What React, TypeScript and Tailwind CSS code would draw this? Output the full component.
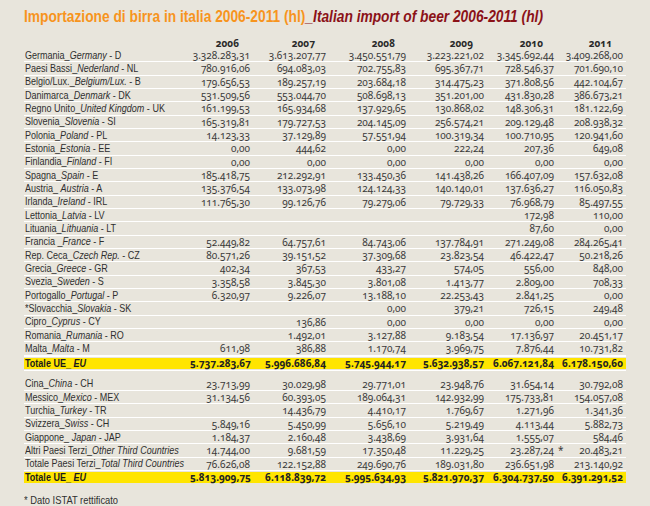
import React from 'react';

type Row = { it: string; en: string; code?: string; v: (string | null)[]; star?: boolean };

const eu: Row[] = [
  { it: 'Germania_', en: 'Germany', code: ' - D', v: ['3.328.283,31', '3.613.207,77', '3.450.551,79', '3.223.221,02', '3.345.692,44', '3.409.268,00'] },
  { it: 'Paesi Bassi_', en: 'Nederland', code: ' - NL', v: ['780.916,06', '694.083,03', '702.755,83', '695.367,71', '728.546,37', '701.690,10'] },
  { it: 'Belgio/Lux._', en: 'Belgium/Lux.', code: ' - B', v: ['179.656,53', '189.257,19', '203.684,18', '314.475,23', '371.808,56', '442.104,67'] },
  { it: 'Danimarca_', en: 'Denmark', code: ' - DK', v: ['531.509,56', '553.044,70', '508.698,13', '351.201,00', '431.830,28', '386.673,21'] },
  { it: 'Regno Unito_', en: 'United Kingdom', code: ' - UK', v: ['161.199,53', '165.934,68', '137.929,65', '130.868,02', '148.306,31', '181.122,69'] },
  { it: 'Slovenia_', en: 'Slovenia', code: ' - SI', v: ['165.319,81', '179.727,53', '204.145,09', '256.574,21', '209.129,48', '208.938,32'] },
  { it: 'Polonia_', en: 'Poland', code: ' - PL', v: ['14.123,33', '37.129,89', '57.551,94', '100.319,34', '100.710,95', '120.941,60'] },
  { it: 'Estonia_', en: 'Estonia', code: ' - EE', v: ['0,00', '444,62', '0,00', '222,24', '207,36', '649,08'] },
  { it: 'Finlandia_', en: 'Finland', code: ' - FI', v: ['0,00', '0,00', '0,00', '0,00', '0,00', '0,00'] },
  { it: 'Spagna_', en: 'Spain', code: ' - E', v: ['185.418,75', '212.292,91', '133.450,36', '141.438,26', '166.407,09', '157.632,08'] },
  { it: 'Austria_ ', en: 'Austria', code: ' - A', v: ['135.376,54', '133.073,98', '124.124,33', '140.140,01', '137.636,27', '116.050,83'] },
  { it: 'Irlanda_', en: 'Ireland', code: ' - IRL', v: ['111.765,30', '99.126,76', '79.279,06', '79.729,33', '76.968,79', '85.497,55'] },
  { it: 'Lettonia_', en: 'Latvia', code: ' - LV', v: [null, null, null, null, '172,98', '110,00'] },
  { it: 'Lituania_', en: 'Lithuania', code: ' - LT', v: [null, null, null, null, '87,60', '0,00'] },
  { it: 'Francia _', en: 'France', code: ' - F', v: ['52.449,82', '64.757,61', '84.743,06', '137.784,91', '271.249,08', '284.265,41'] },
  { it: 'Rep. Ceca_', en: 'Czech Rep.', code: ' - CZ', v: ['80.571,26', '39.151,52', '37.309,68', '23.823,54', '46.422,47', '50.218,26'] },
  { it: 'Grecia_', en: 'Greece', code: ' - GR', v: ['402,34', '367,53', '433,27', '574,05', '556,00', '848,00'] },
  { it: 'Svezia_', en: 'Sweden', code: ' - S', v: ['3.358,58', '3.845,30', '3.801,08', '1.413,77', '2.809,00', '708,33'] },
  { it: 'Portogallo_', en: 'Portugal', code: ' - P', v: ['6.320,97', '9.226,07', '13.188,10', '22.253,43', '2.841,25', '0,00'] },
  { it: '*Slovacchia_', en: 'Slovakia', code: ' - SK', v: [null, null, '0,00', '379,21', '726,15', '249,48'] },
  { it: 'Cipro_', en: 'Cyprus', code: ' - CY', v: [null, '136,86', '0,00', '0,00', '0,00', '0,00'] },
  { it: 'Romania_', en: 'Rumania', code: ' - RO', v: [null, '1.492,01', '3.127,88', '9.183,54', '17.136,97', '20.451,17'] },
  { it: 'Malta_', en: 'Malta', code: ' - M', v: ['611,98', '386,88', '1.170,74', '3.969,75', '7.876,44', '10.731,82'] },
];

const third: Row[] = [
  { it: 'Cina_', en: 'China', code: ' - CH', v: ['23.713,99', '30.029,98', '29.771,01', '23.948,76', '31.654,14', '30.792,08'] },
  { it: 'Messico_', en: 'Mexico', code: ' - MEX', v: ['31.134,56', '60.393,05', '189.064,31', '142.932,99', '175.733,81', '154.057,08'] },
  { it: 'Turchia_', en: 'Turkey', code: ' - TR', v: [null, '14.436,79', '4.410,17', '1.769,67', '1.271,96', '1.341,36'] },
  { it: 'Svizzera_', en: 'Swiss', code: ' - CH', v: ['5.849,16', '5.450,99', '5.656,10', '5.219,49', '4.113,44', '5.882,73'] },
  { it: 'Giappone_ ', en: 'Japan', code: ' - JAP', v: ['1.184,37', '2.160,48', '3.438,69', '3.931,64', '1.555,07', '584,46'] },
  { it: 'Altri Paesi Terzi_', en: 'Other Third Countries', v: ['14.744,00', '9.681,59', '17.350,48', '11.229,25', '23.287,24', '20.483,21'], star: true },
  { it: 'Totale Paesi Terzi_', en: 'Total Third Countries', v: ['76.626,08', '122.152,88', '249.690,76', '189.031,80', '236.651,98', '213.140,92'] },
];

const totEU = ['5.737.283,67', '5.996.686,84', '5.745.944,17', '5.632.938,57', '6.067.121,84', '6.178.150,60'];
const totAll = ['5.813.909,75', '6.118.839,72', '5.995.634,93', '5.821.970,37', '6.304.737,50', '6.391.291,52'];

const years = ['2006', '2007', '2008', '2009', '2010', '2011'];

const grid = 'grid grid-cols-[166px_60px_76px_80px_78px_70px_69px_3px]';
const labelFont = { fontFamily: '"Liberation Sans", Arial, sans-serif' };
const numFont = { fontFamily: '"Noto Sans", "Lato", sans-serif' };

const Label = ({ children, bold }: { children: React.ReactNode; bold?: boolean }) => (
  <div className="flex items-center h-full whitespace-nowrap pl-px text-[11px] leading-none">
    <span
      className={`inline-block origin-left scale-x-[0.82] ${bold ? 'font-bold text-[#1a1a1a]' : 'text-[#2f2f2f]'}`}
      style={labelFont}
    >
      {children}
    </span>
  </div>
);

const DataRow = ({ r }: { r: Row }) => (
  <div className={`${grid} h-[13.33px] items-center border-b border-white`}>
    <Label>
      {r.it}
      <i>{r.en}</i>
      {r.code}
    </Label>
    {r.v.map((x, i) => (
      <div key={i} className="relative text-right text-[10px] leading-none text-[#3a3a3a] oldstyle-nums" style={numFont}>
        {x}
        {r.star && i === 4 && <span className="absolute left-full ml-[4px] top-0">*</span>}
      </div>
    ))}
    <div />
  </div>
);

const TotalRow = ({ v }: { v: string[] }) => (
  <div className={`${grid} h-[11px] items-center bg-[#ffe500] my-px`}>
    <Label bold>
      Totale UE_ <i>EU</i>
    </Label>
    {v.map((x, i) => (
      <div key={i} className="text-right text-[10px] leading-none font-bold text-[#222] oldstyle-nums" style={numFont}>
        {x}
      </div>
    ))}
    <div />
  </div>
);

export default function App() {
  return (
    <div className="w-[650px] h-[506px] bg-[#e8e5dc] overflow-hidden pl-[24px]">
      <div className="pt-[8px] h-[36px] whitespace-nowrap leading-none">
        <span
          className="inline-block origin-left scale-x-[0.86] text-[16px] font-bold leading-none"
          style={{ fontFamily: '"Liberation Sans", Arial, sans-serif' }}
        >
          <span className="text-[#f7941d]">Importazione di birra in italia 2006-2011 (hl)</span>
          <span className="text-[#8b1218] italic">_Italian import of beer 2006-2011 (hl)</span>
        </span>
      </div>
      <div className={`${grid} h-[13px] items-center`}>
        <div />
        {years.map(y => (
          <div key={y} className="text-right pr-[11px] text-[10px] font-bold leading-none text-[#2a2a2a] oldstyle-nums" style={numFont}>
            {y}
          </div>
        ))}
        <div />
      </div>
      <div className="w-[602px]">
        <div className="border-b border-white">
          {eu.map(r => <DataRow key={r.it} r={r} />)}
        </div>
        <TotalRow v={totEU} />
        <div className="h-[8px] border-t border-white" />
        {third.map(r => <DataRow key={r.it} r={r} />)}
        <TotalRow v={totAll} />
        <div className="pt-[11px] text-[11px] leading-none text-[#2f2f2f]" style={labelFont}>
          <span className="inline-block origin-left scale-x-[0.85]">* Dato ISTAT rettificato</span>
        </div>
      </div>
    </div>
  );
}
